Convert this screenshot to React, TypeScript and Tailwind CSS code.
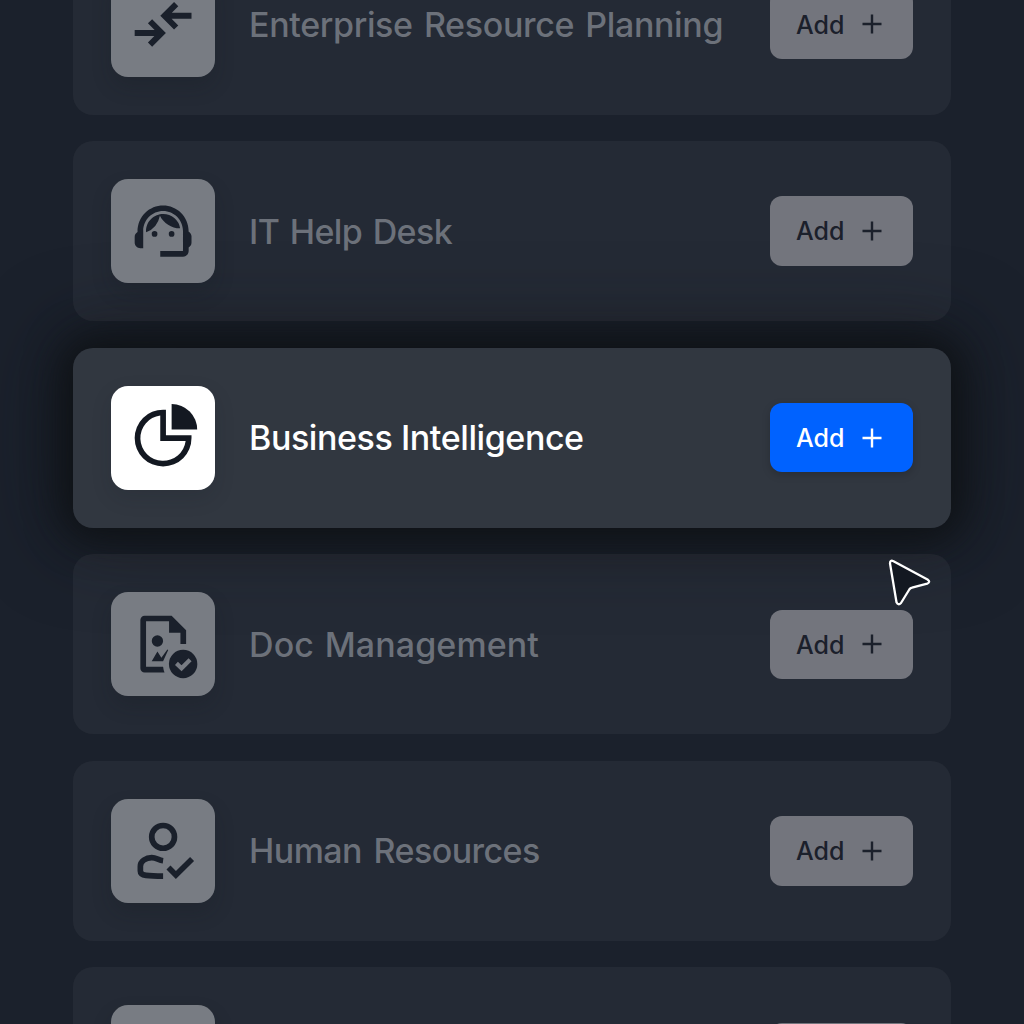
import clsx from 'clsx';
import type { ReactNode } from 'react';

interface AppRow {
  title: string;
  spacing: string;
  icon: ReactNode;
  active?: boolean;
}

const Svg = ({ children }: { children?: ReactNode }) => (
  <svg viewBox="0 0 24 24" className="size-[68.2px] overflow-visible" fill="currentColor">
    {children}
  </svg>
);

const ArrowsIcon = () => (
  <Svg>
    <path
      d="M2 15.1h9.5M7.4 11l4.1 4.1-4.1 4.1M22 9.1h-9.5M16.6 5l-4.1 4.1 4.1 4.1"
      fill="none"
      stroke="currentColor"
      strokeWidth="2.1"
    />
  </Svg>
);

const AgentIcon = () => (
  <Svg>
    <path d="M21 12.22C21 6.73 16.74 3 12 3c-4.69 0-9 3.65-9 9.28-.6.34-1 .98-1 1.72v2c0 1.1.9 2 2 2h1v-6.1c0-3.87 3.13-7 7-7s7 3.13 7 7V19h-8v2h8c1.1 0 2-.9 2-2v-1.22c.59-.31 1-.92 1-1.64v-2.3c0-.7-.41-1.31-1-1.62z" />
    <circle cx="9" cy="13" r="1" />
    <circle cx="15" cy="13" r="1" />
    <path d="M18 11.03A6.04 6.04 0 0 0 12.05 6c-3.03 0-6.29 2.51-6.03 6.45a8.075 8.075 0 0 0 4.86-5.89c1.31 2.63 4 4.44 7.12 4.47z" />
  </Svg>
);

const PieIcon = () => (
  <Svg>
    <path
      fillRule="evenodd"
      d="M13 2v9h9v1A10 10 0 1 1 12 2zM11 4.062A8 8 0 1 0 19.938 13H11z"
    />
    <path d="M15 0a9 9 0 0 1 9 9h-9z" />
  </Svg>
);

const DocIcon = () => (
  <Svg>
    <path d="M5.5 2H15l5.1 5.1V12h-2V8h-4V4H6v16h6q.1 1 .5 2h-7A1.5 1.5 0 0 1 4 20.5v-17A1.5 1.5 0 0 1 5.500 2z" />
    <circle cx="10" cy="10.9" r="2" />
    <path d="M8 18l2-3.4 1.4 2.2 2.1-2.9.3.2L12 18z" />
    <circle cx="19.05" cy="19" r="5" />
    <path d="M16.7 18.8l1.8 1.7 3-3" fill="none" stroke="#787c83" strokeWidth="1.5" />
  </Svg>
);

const PersonIcon = () => (
  <Svg>
    <g fill="none" stroke="currentColor" strokeWidth="2">
      <circle cx="12" cy="7" r="4" />
      <path d="M12 15.4c-1.6-.2-2.4-1.1-4-1.1-2 0-4 1.2-4 3V19c0 1.1.8 1.4 2 1.55 2 .25 4 .25 6 .25" />
      <path d="M13.9 17.8l2.6 2.6 5.7-5.6" />
    </g>
  </Svg>
);

const ROWS: AppRow[] = [
  {
    title: 'Enterprise Resource Planning',
    spacing: 'tracking-[-0.35px] [word-spacing:2.5px]',
    icon: <ArrowsIcon />,
  },
  {
    title: 'IT Help Desk',
    spacing: 'tracking-[-0.6px] [word-spacing:2px]',
    icon: <AgentIcon />,
  },
  {
    title: 'Business Intelligence',
    spacing: 'tracking-[-0.42px]',
    icon: <PieIcon />,
    active: true,
  },
  {
    title: 'Doc Management',
    spacing: 'tracking-[0.1px] [word-spacing:1.5px]',
    icon: <DocIcon />,
  },
  {
    title: 'Human Resources',
    spacing: 'tracking-[-0.55px] [word-spacing:3px]',
    icon: <PersonIcon />,
  },
  { title: '', spacing: '', icon: <Svg /> },
];

const AddButton = ({ active, label }: { active?: boolean; label: string }) => (
  <button
    className={clsx(
      'flex h-[69.4px] w-[142.6px] shrink-0 items-center rounded-[12px] pl-[25.5px] text-[25px] font-medium',
      active
        ? 'bg-[#0062ff] text-white shadow-[0_3px_8px_rgba(0,0,0,0.18)]'
        : 'bg-[#73757d] text-[#1b202b]'
    )}
  >
    {label && (
      <>
        <span className="w-[66px] pt-[2px] text-left">{label}</span>
        <svg viewBox="0 0 20 20" className="size-5" stroke="currentColor" strokeWidth="2.4">
          <path d="M.5 10h19M10 .5v19" />
        </svg>
      </>
    )}
  </button>
);

const Row = ({ title, spacing, icon, active }: AppRow) => (
  <div
    className={clsx(
      'relative flex h-[180px] shrink-0 items-center rounded-[20px] px-[38px]',
      active
        ? 'z-0 bg-[#313740] shadow-[0_0_36px_10px_rgba(15,18,21,0.95),0_0_80px_12px_rgba(15,18,23,0.6)]'
        : 'z-10 bg-[#f4fffa]/[0.042]'
    )}
  >
    <div
      className={clsx(
        'flex size-[104px] shrink-0 items-center justify-center rounded-[17px]',
        active
          ? 'bg-white text-[#131821] shadow-[0_8px_20px_rgba(20,24,32,0.15)]'
          : 'bg-[#787c83] text-[#1a202b] shadow-[0_10px_20px_rgba(20,24,32,0.2)]'
      )}
    >
      {icon}
    </div>
    <h3
      className={clsx(
        'ml-[34px] flex-1 whitespace-nowrap text-[34px] font-medium',
        spacing,
        active ? 'text-white' : 'text-[#6c717a]'
      )}
    >
      {title}
    </h3>
    <AddButton active={active} label={title ? 'Add' : ''} />
  </div>
);

export default function App() {
  return (
    <div className="relative h-[1024px] w-[1024px] overflow-hidden bg-[#1b212c] font-['Inter',sans-serif]">
      <div className="-mt-[65.5px] flex flex-col gap-[26.6px] px-[73px]">
        {ROWS.map((row, i) => (
          <Row key={i} {...row} />
        ))}
      </div>

      {/* cursor */}
      <svg
        viewBox="0 0 44 50"
        className="absolute left-[887px] top-[558px] z-20 h-[50px] w-[44px]"
        fill="#131821"
        stroke="white"
        strokeWidth="2.3"
        strokeLinejoin="round"
      >
        <path d="M6.5 3.2L40.5 21.5Q44 24 40.2 25.6L25 29.6Q23.3 30 22.3 31.5L14 45Q11.2 47.8 9.5 44.3L3 5.4Q3 1.6 6.5 3.2z" />
      </svg>
    </div>
  );
}
